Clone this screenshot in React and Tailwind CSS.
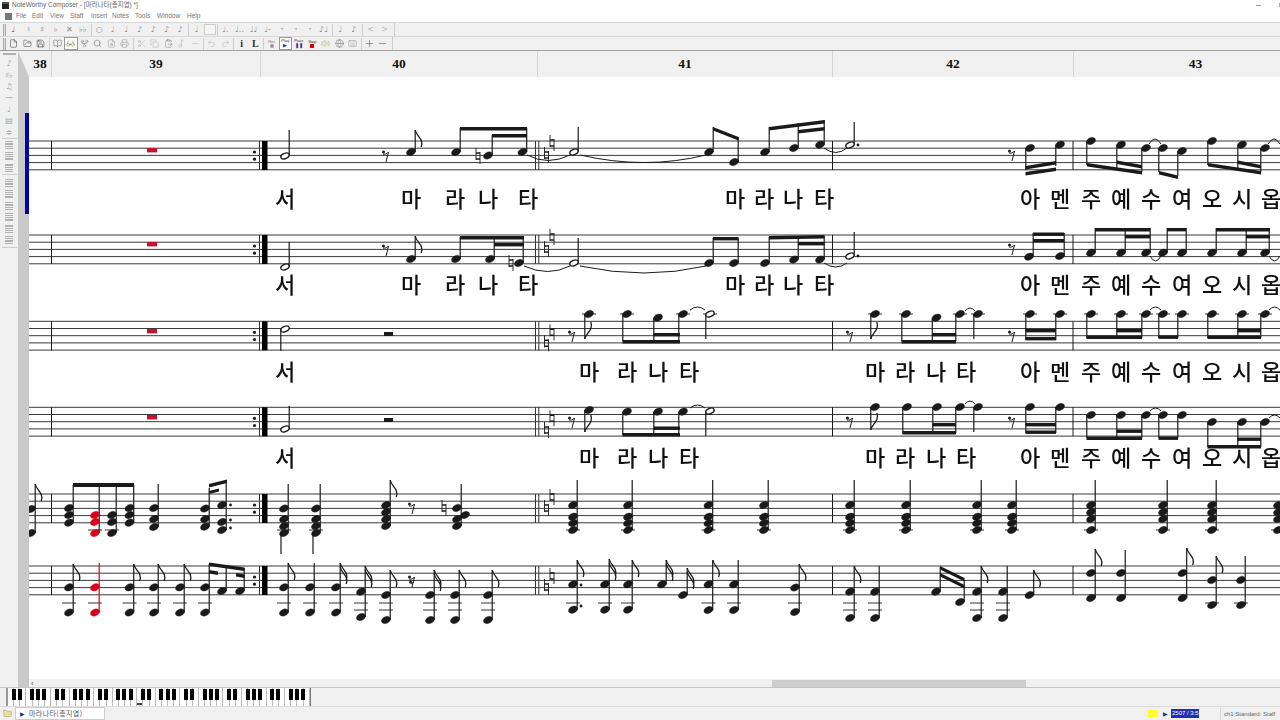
import { File, FolderOpen, Save, BookOpen, Glasses, GitFork, Search, FileSearch, Printer, Scissors, Copy, ClipboardPaste, Music2, Undo2, Redo2, Plus, Minus, Volume2, Globe, Keyboard, Folder } from 'lucide-react'

const INK = '#1a1a1a'
const RED = '#d8001a'

// score helpers, coordinates are page pixels (svg viewBox starts at 29,77)
function Note({ x, ys, tip, flag = 0, open, red, ledgers = [], dots = [], color }) {
  const ink = red ? RED : INK
  const up = tip != null && tip < Math.min(...ys)
  const sx = up ? x + 4.2 : x - 4.2
  const far = up ? Math.max(...ys) : Math.min(...ys)
  return (
    <g>
      {ledgers.map(l => <line key={l} x1={x - 7} x2={x + 7} y1={l} y2={l} stroke="#333" strokeWidth="1" />)}
      {tip != null && <line x1={sx} x2={sx} y1={far} y2={tip} stroke={color || ink} strokeWidth="1.2" />}
      {ys.map((y, i) => (
        <ellipse key={i} cx={x} cy={y} rx={open ? 4.4 : 4.8} ry={open ? 2.6 : 3.4} transform={`rotate(-24 ${x} ${y})`}
          fill={open ? '#fff' : ink} stroke={ink} strokeWidth={open ? 1.4 : 0.3} />
      ))}
      {Array.from({ length: flag }).map((_, i) => {
        const t = tip + i * 4 * (up ? 1 : -1)
        const d = up ? 1 : -1
        return <path key={i} fill="none" stroke={ink} strokeWidth="1.3"
          d={`M${sx} ${t} C${sx + 1} ${t + 6 * d},${sx + 9} ${t + 9 * d},${sx + 6} ${t + 17 * d}`} />
      })}
      {dots.map((d, i) => <circle key={i} cx={d[0]} cy={d[1]} r="1.4" fill={INK} />)}
    </g>
  )
}

const Beam = ({ a, b, c, d, t = 3.4 }) => (
  <polygon points={`${a},${b} ${c},${d} ${c},${d + t} ${a},${b + t}`} fill={INK} />
)

const Natural = ({ x, y }) => (
  <g stroke={INK} fill="none">
    <path d={`M${x - 2} ${y - 8}V${y + 4}M${x + 2} ${y - 4}V${y + 8}`} strokeWidth="0.9" />
    <path d={`M${x - 2} ${y - 3}H${x + 2}M${x - 2} ${y + 3}H${x + 2}`} strokeWidth="1.5" />
  </g>
)

const Rest8 = ({ x, y }) => (
  <g>
    <circle cx={x - 2.5} cy={y - 1} r="1.5" fill={INK} />
    <path d={`M${x - 3} ${y + 1}C${x - 1} ${y + 1.5},${x + 1} ${y + 1},${x + 2.5} ${y - 1}L${x} ${y + 9}`} fill="none" stroke={INK} strokeWidth="1" />
  </g>
)

const Rest16 = ({ x, y }) => (
  <g>
    <Rest8 x={x} y={y} />
    <circle cx={x - 1.5} cy={y + 4} r="1.5" fill={INK} />
    <path d={`M${x - 1} ${y + 6}L${x + 2} ${y + 4}`} stroke={INK} strokeWidth="1" />
  </g>
)

const Curve = ({ d }) => <path d={d} fill="none" stroke={INK} strokeWidth="1" />

const Arch = ({ a, b, y, h = -6 }) => <Curve d={`M${a} ${y}Q${(a + b) / 2} ${y + h * 2},${b} ${y}`} />

const LYRIC_TAIL = [[1030, '아'], [1060, '멘'], [1091, '주'], [1121, '예'], [1151, '수'], [1182, '여'], [1212, '오'], [1242, '시'], [1271, '옵']]
const LYRICS_A = [[285, '서'], [411, '마'], [455, '라'], [488, '나'], [528, '타'], [735, '마'], [764, '라'], [793, '나'], [824, '타'], ...LYRIC_TAIL]
const LYRICS_B = [[285, '서'], [589, '마'], [627, '라'], [658, '나'], [689, '타'], [875, '마'], [905, '라'], [936, '나'], [966, '타'], ...LYRIC_TAIL]

function Staff({ top, rep, nat }) {
  return (
    <g>
      {[0, 1, 2, 3, 4].map(i => (
        <line key={i} x1="29" x2="1280" y1={top + i * 7.2} y2={top + i * 7.2} stroke="#3a3a3a" strokeWidth="1" />
      ))}
      {[51.5, 832.5, 1073].map(x => <line key={x} x1={x} x2={x} y1={top} y2={top + 29} stroke={INK} strokeWidth="1" />)}
      <rect x="262" y={top} width="5.5" height="29" fill="#000" />
      {[259.5, 535.5, 538.8].map(x => <line key={x} x1={x} x2={x} y1={top} y2={top + 29} stroke="#333" strokeWidth="1" />)}
      <circle cx="254.5" cy={top + 11} r="1.6" fill={INK} />
      <circle cx="254.5" cy={top + 18.2} r="1.6" fill={INK} />
      <Natural x={546.5} y={top + nat[0]} />
      <Natural x={552} y={top + nat[1]} />
      {rep && <rect x="147" y={rep} width="10" height="4.4" fill="#c8102e" />}
    </g>
  )
}

function Score() {
  return (
    <svg viewBox="29 77 1251 602" className="w-[1251px] h-[602px] block bg-white shrink-0 blur-[0.3px]">
      <Staff top={141} rep={148} nat={[14, 2]} />
      <Staff top={235} rep={242} nat={[14, 2]} />
      <Staff top={321.3} rep={329} nat={[22, 11]} />
      <Staff top={407.3} rep={415} nat={[22.7, 11]} />
      <Staff top={494} nat={[14, 3]} />
      <Staff top={566} nat={[21, 10]} />

      {/* staff 1 */}
      <Note x={285} ys={[156]} tip={130} open />
      <Rest8 x={386} y={153} />
      <Note x={411} ys={[152]} tip={130} flag={1} />
      <Note x={456} ys={[152]} tip={128} />
      <Natural x={478} y={156} />
      <Note x={488} ys={[155.5]} tip={135} />
      <Note x={522.5} ys={[152]} tip={128} />
      <Beam a={460} b={127} c={527} d={127} />
      <Beam a={492} b={134} c={527} d={134} />
      <Curve d="M527 155Q548 166 570 155" />
      <Note x={574} ys={[152]} tip={127} open />
      <Curve d="M580 155Q645 170 706 155" />
      <Note x={709} ys={[152]} tip={127} />
      <Note x={734} ys={[162]} tip={137} />
      <Beam a={713} b={127} c={738.5} d={137} />
      <Note x={765} ys={[152]} tip={127} />
      <Note x={794} ys={[148]} tip={123} />
      <Note x={820} ys={[144.6]} tip={120} />
      <Beam a={769} b={127} c={824.5} d={120} />
      <Beam a={798} b={130} c={824.5} d={127} />
      <Curve d="M824 148Q836 157 847 148" />
      <Note x={850} ys={[145]} tip={122} open dots={[[858, 145]]} />
      <Rest8 x={1012} y={152} />
      <Note x={1030} ys={[148]} tip={170} />
      <Note x={1060} ys={[144.7]} tip={166} />
      <Beam a={1025.5} b={166} c={1056} d={161} />
      <Beam a={1025.5} b={172} c={1056} d={167.5} />
      <Note x={1091} ys={[141]} tip={165} />
      <Note x={1121} ys={[144.7]} tip={168} />
      <Note x={1146} ys={[148]} tip={172} />
      <Beam a={1087} b={163} c={1142} d={171} />
      <Beam a={1117} b={160.5} c={1142} d={165} />
      <Arch a={1149} b={1161} y={144} h={-5} />
      <Note x={1163} ys={[148]} tip={172} />
      <Note x={1182} ys={[151]} tip={176} />
      <Beam a={1159} b={171} c={1178} d={175.5} />
      <Note x={1212} ys={[141]} tip={165} />
      <Note x={1242} ys={[144.7]} tip={168} />
      <Note x={1265} ys={[148]} tip={172} />
      <Beam a={1208} b={163} c={1261} d={171} />
      <Beam a={1238} b={160.5} c={1261} d={165} />
      <Arch a={1268} b={1280} y={144} h={-5} />

      {/* staff 2 */}
      <Note x={285} ys={[267]} tip={242} open />
      <Rest8 x={386} y={247} />
      <Note x={411} ys={[259]} tip={236} flag={1} />
      <Note x={456} ys={[259]} tip={237} />
      <Note x={490} ys={[259]} tip={237} />
      <Natural x={511} y={263} />
      <Note x={519} ys={[263]} tip={237} />
      <Beam a={460} b={236} c={524} d={236} />
      <Beam a={494} b={243} c={524} d={243} />
      <Curve d="M524 266Q548 277 570 266" />
      <Note x={574} ys={[263]} tip={238} open />
      <Curve d="M580 266Q645 280 706 266" />
      <Note x={709} ys={[263]} tip={238} />
      <Note x={734} ys={[263]} tip={238} />
      <Beam a={713} b={237} c={738.5} d={237} />
      <Note x={765} ys={[263]} tip={237} />
      <Note x={794} ys={[259.5]} tip={236} />
      <Note x={820} ys={[259.5]} tip={236} />
      <Beam a={769} b={236} c={824.5} d={235} />
      <Beam a={798} b={242} c={824.5} d={242} />
      <Curve d="M824 263Q836 271 847 263" />
      <Note x={850} ys={[256]} tip={232} open dots={[[858, 256]]} />
      <Rest8 x={1012} y={246} />
      <Note x={1029} ys={[256.7]} tip={233} />
      <Note x={1060} ys={[256]} tip={233} />
      <Beam a={1033} b={232.5} c={1064} d={232.5} />
      <Beam a={1033} b={239} c={1064} d={239} />
      {[[1091, 1121, 1146, 1095, 1125, 1150], [1212, 1242, 1265, 1216, 1246, 1270]].map(g => (
        <g key={g[0]}>
          <Note x={g[0]} ys={[252.7]} tip={228} />
          <Note x={g[1]} ys={[252.7]} tip={228} />
          <Note x={g[2]} ys={[252.7]} tip={228} />
          <Beam a={g[3]} b={228} c={g[5]} d={228} />
          <Beam a={g[4]} b={235} c={g[5]} d={235} />
        </g>
      ))}
      <Arch a={1150} b={1161} y={256} h={5} />
      <Arch a={1269} b={1280} y={256} h={5} />
      <Note x={1163} ys={[252.7]} tip={228} />
      <Note x={1182} ys={[252.7]} tip={228} />
      <Beam a={1167} b={228} c={1186} d={228} />

      {/* staff 3 */}
      <Note x={285} ys={[329]} tip={351} open />
      <rect x="384" y="332" width="9" height="4" fill={INK} />
      <Rest8 x={572} y={333} />
      <Note x={589} ys={[314]} tip={339} flag={1} ledgers={[314]} />
      <Note x={627} ys={[314]} tip={341} ledgers={[314]} />
      <Note x={658} ys={[317.7]} tip={341} />
      <Note x={683} ys={[314]} tip={341} ledgers={[314]} />
      <Beam a={622.5} b={340} c={680} d={340} />
      <Beam a={653.5} b={333} c={680} d={333} />
      <Arch a={690} b={705} y={310} h={-3} />
      <Note x={710} ys={[314]} tip={339} open ledgers={[314]} />
      <Rest8 x={850} y={333} />
      <Note x={875} ys={[314]} tip={339} flag={1} ledgers={[314]} />
      <Note x={906} ys={[314]} tip={341} ledgers={[314]} />
      <Note x={936.5} ys={[317.7]} tip={341} />
      <Note x={960} ys={[314]} tip={341} ledgers={[314]} />
      <Beam a={901.5} b={340} c={956} d={340} />
      <Beam a={932} b={333} c={956} d={333} />
      <Arch a={965} b={975} y={311} h={-3} />
      <Note x={978} ys={[314]} tip={339} ledgers={[314]} />
      <Rest8 x={1012} y={333} />
      <Note x={1030} ys={[314]} tip={340} ledgers={[314]} />
      <Note x={1060} ys={[314]} tip={340} ledgers={[314]} />
      <Beam a={1025.5} b={329} c={1056} d={329} />
      <Beam a={1025.5} b={337} c={1056} d={337} />
      {[[1091, 1121, 1146], [1212, 1242, 1265]].map(g => (
        <g key={g[0]}>
          {g.map(x => <Note key={x} x={x} ys={[314]} tip={338} ledgers={[314]} />)}
          <Beam a={g[0] - 4.5} b={335.5} c={g[2] - 4} d={335.5} />
          <Beam a={g[1] - 4.5} b={329} c={g[2] - 4} d={329} />
        </g>
      ))}
      <Arch a={1150} b={1161} y={310} h={-3} />
      <Arch a={1269} b={1280} y={310} h={-3} />
      <Note x={1163} ys={[314]} tip={338} ledgers={[314]} />
      <Note x={1182} ys={[314]} tip={338} ledgers={[314]} />
      <Beam a={1158.5} b={335.5} c={1178} d={335.5} />

      {/* staff 4 */}
      <Note x={285} ys={[429]} tip={406} open />
      <rect x="384" y="418" width="9" height="4" fill={INK} />
      <Rest8 x={572} y={419} />
      <Note x={589} ys={[410]} tip={432} flag={1} />
      <Note x={627} ys={[411.7]} tip={435} />
      <Note x={658} ys={[411.7]} tip={435} />
      <Note x={683} ys={[411.7]} tip={435} />
      <Beam a={622.5} b={433} c={680} d={433} />
      <Beam a={653.5} b={426.5} c={680} d={426.5} />
      <Arch a={690} b={705} y={408} h={-3} />
      <Note x={710} ys={[411]} tip={436} open />
      <Rest8 x={850} y={419} />
      <Note x={875} ys={[407]} tip={430} flag={1} />
      <Note x={907} ys={[407]} tip={433} />
      <Note x={937} ys={[407]} tip={433} />
      <Note x={960} ys={[407]} tip={433} />
      <Beam a={902.5} b={431} c={956} d={431} />
      <Beam a={932.5} b={423} c={956} d={423} />
      <Arch a={965} b={975} y={404} h={-3} />
      <Note x={978} ys={[407]} tip={432} />
      <Rest8 x={1012} y={419} />
      <Note x={1030} ys={[407]} tip={433} />
      <Note x={1060} ys={[407]} tip={433} />
      <Beam a={1025.5} b={423} c={1056} d={423} />
      <Beam a={1025.5} b={430.5} c={1056} d={430.5} />
      {[1091, 1121, 1146, 1163, 1182].map(x => <Note key={x} x={x} ys={[415]} tip={438} />)}
      <Beam a={1086.5} b={436.5} c={1142} d={436.5} />
      <Beam a={1116.5} b={429.5} c={1142} d={429.5} />
      <Beam a={1158.5} b={436.5} c={1178} d={436.5} />
      <Arch a={1150} b={1161} y={411} h={-3} />
      <Arch a={1269} b={1280} y={418} h={-3} />
      {[1212, 1242, 1265].map(x => <Note key={x} x={x} ys={[422]} tip={447} />)}
      <Beam a={1207.5} b={445} c={1261} d={445} />
      <Beam a={1237.5} b={437.5} c={1261} d={437.5} />

      {/* staff 5 */}
      <Note x={31} ys={[509, 533]} tip={484} flag={1} />
      <Note x={69} ys={[508, 515, 522.7]} tip={485} />
      <Note x={95} ys={[515, 522, 533]} tip={485} red ledgers={[530]} color={INK} />
      <Note x={112} ys={[515, 522, 533]} tip={485} ledgers={[530]} />
      <Note x={129.5} ys={[508, 515, 522.7]} tip={485} />
      <Beam a={73} b={483} c={134} d={483} t={4} />
      <Note x={154} ys={[508, 519, 527]} tip={484} />
      <Note x={205} ys={[508.5, 519, 526.7]} tip={488} />
      <Note x={222} ys={[505, 522, 530]} tip={480} dots={[[230.5, 505], [230.5, 520], [230.5, 528]]} />
      <Beam a={209} b={484} c={227} d={479.5} t={3.5} />
      <Beam a={209} b={491} c={219} d={488.5} t={3} />
      {[284, 316].map(x => (
        <g key={x}>
          <Note x={x} ys={[508.5, 519, 526, 533]} tip={484} ledgers={[530]} />
          <line x1={x - 3} x2={x - 3} y1={533} y2={554} stroke={INK} strokeWidth="1.2" />
        </g>
      ))}
      <Note x={386} ys={[505, 512, 519, 526]} tip={480} flag={1} />
      <Rest8 x={412} y={505} />
      <Natural x={444} y={508} />
      <Note x={457} ys={[508, 519, 526]} tip={484} />
      <Note x={465} ys={[515]} />
      {[573, 628, 708.5, 764, 850, 906, 977, 1012].map(x => (
        <Note key={x} x={x} ys={[505, 516.7, 523, 530]} tip={480} ledgers={[530]} />
      ))}
      {[1091, 1163, 1212, 1278].map(x => (
        <Note key={x} x={x} ys={[505, 512, 519, 530]} tip={480} ledgers={[530]} />
      ))}

      {/* staff 6 */}
      <Note x={69} ys={[587.3, 612.5]} tip={564} flag={1} ledgers={[603]} />
      <Note x={95} ys={[587.3, 612.5]} tip={563} red ledgers={[603]} />
      <Note x={129.5} ys={[587.3, 612.5]} tip={564} flag={1} ledgers={[603]} />
      <Note x={154} ys={[587.3, 612.5]} tip={564} flag={1} ledgers={[603]} />
      <Note x={180} ys={[587.3, 612.5]} tip={564} flag={1} ledgers={[603]} />
      <Note x={205} ys={[587.3, 612.5]} tip={564} ledgers={[603]} />
      <Note x={222} ys={[591]} tip={566} />
      <Note x={240} ys={[591]} tip={568} />
      <Beam a={209} b={562.5} c={244.5} d={567.5} />
      <Beam a={209} b={570} c={218} d={571.5} />
      <Beam a={236} b={573} c={244.5} d={574.5} />
      <Note x={284} ys={[587.3, 612.5]} tip={563} flag={1} ledgers={[603]} />
      <Note x={310} ys={[587.3, 612.5]} tip={563} ledgers={[603]} />
      <Note x={336} ys={[587.3, 612.5]} tip={563} flag={2} ledgers={[603]} />
      <Note x={361} ys={[591.7, 617]} tip={566} flag={2} ledgers={[603, 610]} />
      <Note x={386} ys={[595, 620]} tip={570} flag={1} ledgers={[603, 610]} />
      <Rest16 x={412} y={578} />
      <Note x={430} ys={[595, 620]} tip={570} flag={2} ledgers={[603, 610]} />
      <Note x={455} ys={[595, 620]} tip={570} flag={1} ledgers={[603, 610]} />
      <Note x={488} ys={[595, 620]} tip={570} flag={1} ledgers={[603, 610]} />
      <Note x={573} ys={[584.3, 609.7]} tip={560} flag={1} ledgers={[603]} dots={[[581, 585], [581, 606]]} />
      <Note x={605} ys={[584.3, 609.7]} tip={559} flag={2} ledgers={[603]} />
      <Note x={628} ys={[584.3, 609.7]} tip={560} flag={1} ledgers={[603]} />
      <Note x={662} ys={[584.3]} tip={560} flag={2} />
      <Note x={683} ys={[595]} tip={568} flag={2} />
      <Note x={708.5} ys={[584.3, 610]} tip={560} flag={1} ledgers={[603]} />
      <Note x={734} ys={[584.3, 610]} tip={560} ledgers={[603]} />
      <Note x={795} ys={[587.5, 612]} tip={564} flag={1} ledgers={[603]} />
      <Note x={850} ys={[591.7, 618]} tip={566} flag={1} ledgers={[603, 610]} />
      <Note x={875} ys={[591.7, 618]} tip={566} ledgers={[603, 610]} />
      <Note x={936} ys={[591.7]} tip={567} />
      <Note x={960} ys={[602]} tip={580} />
      <Beam a={940} b={566} c={964.5} d={578} />
      <Beam a={940} b={573} c={964.5} d={585} />
      <Note x={977} ys={[591.7, 618]} tip={566} flag={1} ledgers={[603, 610]} />
      <Note x={1003} ys={[591.7, 618]} tip={566} ledgers={[603, 610]} />
      <Note x={1029.5} ys={[595]} tip={570} flag={1} />
      <Note x={1091} ys={[573, 598]} tip={549} flag={1} />
      <Note x={1121} ys={[573, 598]} tip={550} />
      <Note x={1182.5} ys={[573, 598]} tip={548} flag={1} />
      <Note x={1212} ys={[580, 605]} tip={556} flag={1} ledgers={[603]} />
      <Note x={1241} ys={[580, 605]} tip={556} ledgers={[603]} />

      {/* lyrics */}
      {[[198, LYRICS_A], [284, LYRICS_A], [371, LYRICS_B], [457, LYRICS_B]].map(([y, row]) =>
        row.map(([x, t]) => (
          <text key={`${y}-${x}`} x={x} y={y + 9} textAnchor="middle" fill="#111"
            className="font-['Noto_Sans_CJK_KR',sans-serif] font-medium text-[22px]">{t}</text>
        ))
      )}
    </svg>
  )
}

const Cell = ({ children, w = 'w-[13.5px]', active }) => (
  <div className={`${w} h-[13px] shrink-0 flex items-center justify-center text-[8px] leading-none text-[#8a8a8a] font-['DejaVu_Sans',sans-serif] ${active ? 'border border-[#9a9a9a] bg-white' : ''}`}>
    {children}
  </div>
)
const Sep = () => <div className="w-px h-[12px] bg-[#cfcfcf] mx-[1px] shrink-0" />
const Grip = () => <div className="w-[3px] h-[12px] ml-[3px] mr-[1px] shrink-0 border-x border-[#aaa] bg-[#ddd]" />

const Ico = ({ I, c = '#8a8a8a', s = 9 }) => <I size={s} strokeWidth={1.2} color={c} />

const Lines = () => (
  <div className="h-[11.4px] shrink-0 flex items-center">
    <div className="h-[8px] w-[8px] flex flex-col justify-between">
      {[0, 1, 2, 3, 4].map(i => <div key={i} className="h-px bg-[#b0b0b0]" />)}
    </div>
  </div>
)

function Piano() {
  const black = [1, 1, 0, 1, 1, 1, 0]
  const keys = Array.from({ length: 49 })
  return (
    <div className="flex h-[18px] ml-[4px] border-l-2 border-[#999]">
      <div className="flex h-[18px] border-r border-[#777]">
        {keys.map((_, i) => (
          <div key={i} className="relative w-[6.17px] h-full bg-white border-r border-[#bbb]">
            {black[i % 7] === 1 && i < 48 && <div className="absolute top-[1px] right-[-2.5px] w-[4px] h-[11px] bg-black z-10" />}
            {i === 21 && <div className="absolute bottom-[1px] left-[0px] w-[5px] h-[2px] bg-[#444] z-10" />}
          </div>
        ))}
      </div>
    </div>
  )
}

export default function App() {
  const menu = [['File', 'w-[16px]'], ['Edit', 'w-[18px]'], ['View', 'w-[20px]'], ['Staff', 'w-[21px]'], ['Insert', 'w-[21px]'], ['Notes', 'w-[23px]'], ['Tools', 'w-[22px]'], ['Window', 'w-[30px]'], ['Help', 'w-[20px]']]
  return (
    <div className="w-[1280px] h-[720px] overflow-hidden flex flex-col bg-[#f0f0f0] font-['Liberation_Sans',sans-serif]">
      <div className="h-[10px] bg-white flex items-center shrink-0">
        <div className="w-[7px] h-[7px] ml-[2px] mr-[3px] bg-[#222] border-t-2 border-[#555]" />
        <span className="text-[6.5px] leading-none text-[#666] font-['Liberation_Sans','Noto_Sans_CJK_KR',sans-serif]">NoteWorthy Composer - [마라나타(총지엽) *]</span>
        <div className="ml-auto w-[5px] h-px bg-[#999]" />
        <div className="ml-[18px] w-[1px] h-[4px] bg-[#aaa]" />
      </div>
      <div className="h-[12px] bg-white flex items-center shrink-0">
        <div className="w-[7px] h-[7px] ml-[5px] mr-[4px] bg-[#777]" />
        {menu.map(([m, w]) => <span key={m} className={`${w} text-[6.5px] leading-none text-[#777]`}>{m}</span>)}
      </div>

      <div className="h-[14px] flex items-center shrink-0 border-t border-[#d8d8d8]">
        <Grip />
        <Cell w="w-[13px]"><span className="text-[#c33]">♩</span></Cell>
        <div className="w-[2px]" />
        {['♮', '♯', '♭', '✕', '♭♭'].map(g => <Cell key={g}>{g}</Cell>)}
        <Sep />
        {['○', '♩', '♩', '♪', '♪', '♪', '♪'].map((g, i) => <Cell key={i}>{g}</Cell>)}
        <Sep />
        <Cell>♩</Cell>
        <div className="w-[12px] h-[11px] border border-[#ccc] bg-[#f6f6f6] shrink-0" />
        <Sep />
        {['♩.', '♩..', '♩♩', '♩-', '𝄾', '𝄾', '𝄾', '♪♩'].map((g, i) => <Cell key={i} w="w-[14px]">{g}</Cell>)}
        <Sep />
        <Cell>♩</Cell>
        <Cell>♪</Cell>
        <Sep />
        <Cell w="w-[14px]"><span className="text-[#bbb]">&lt;</span></Cell>
        <Cell w="w-[14px]"><span className="text-[#bbb]">&gt;</span></Cell>
        <div className="ml-[2px] w-px h-[14px] bg-[#ccc]" />
      </div>

      <div className="h-[14px] flex items-center shrink-0 border-t border-[#d8d8d8]">
        <Grip />
        <Cell><Ico I={File} c="#222" /></Cell>
        <Cell><Ico I={FolderOpen} c="#333" /></Cell>
        <Cell><Ico I={Save} c="#111" /></Cell>
        <Sep />
        <Cell><Ico I={BookOpen} c="#555" /></Cell>
        <Cell active><Ico I={Glasses} c="#5a7a20" /></Cell>
        <Cell><Ico I={GitFork} c="#777" /></Cell>
        <Cell><Ico I={Search} c="#555" /></Cell>
        <Cell><Ico I={FileSearch} /></Cell>
        <Cell><Ico I={Printer} /></Cell>
        <Sep />
        <Cell><Ico I={Scissors} c="#aaa" /></Cell>
        <Cell><Ico I={Copy} c="#aaa" /></Cell>
        <Cell><Ico I={ClipboardPaste} c="#777" /></Cell>
        <Cell><Ico I={Music2} c="#aaa" /></Cell>
        <Cell><Ico I={Minus} c="#aaa" /></Cell>
        <Sep />
        <Cell><Ico I={Undo2} c="#aaa" /></Cell>
        <Cell><Ico I={Redo2} c="#aaa" /></Cell>
        <Sep />
        <Cell><span className="font-['Liberation_Serif',serif] font-bold text-[10px] text-[#333]">i</span></Cell>
        <Cell><span className="font-['Liberation_Serif',serif] font-bold text-[10px] text-[#333]">L</span></Cell>
        <Sep />
        <Cell><div className="flex flex-col items-center text-[4px] text-[#777] font-['Liberation_Sans']"><span>Rec</span><span className="w-[4px] h-[4px] rounded-full bg-[#999]" /></div></Cell>
        <Cell active><div className="flex flex-col items-center text-[4px] text-[#333] font-['Liberation_Sans']"><span>Play</span><span className="text-[5px] text-[#23308a]">▶</span></div></Cell>
        <Cell><div className="flex flex-col items-center text-[4px] text-[#333] font-['Liberation_Sans']"><span>Paus</span><span className="text-[5px] text-[#23308a]">❚❚</span></div></Cell>
        <Cell><div className="flex flex-col items-center text-[4px] text-[#333] font-['Liberation_Sans']"><span>Stop</span><span className="w-[4px] h-[4px] bg-[#d00]" /></div></Cell>
        <Cell><Ico I={Volume2} c="#7a9a30" /></Cell>
        <Cell><Ico I={Globe} c="#666" /></Cell>
        <Cell><Ico I={Keyboard} c="#888" /></Cell>
        <Sep />
        <Cell><Ico I={Plus} c="#555" s={11} /></Cell>
        <Cell><Ico I={Minus} c="#555" s={11} /></Cell>
        <div className="ml-[2px] w-px h-[14px] bg-[#ccc]" />
      </div>

      <div className="flex-1 min-h-0 flex border-t border-[#a0a0a0]">
        <div className="w-[18px] shrink-0 flex flex-col items-center pt-[2px] bg-[#f0f0f0]">
          <div className="w-[13px] h-[2px] bg-[#b0b0b0] mb-[3.5px] shrink-0" />
          {['♪', '♯♭', '♫', '—', '♩', '▤', '≑'].map((g, i) => (
            <div key={i} className="h-[11.4px] shrink-0 flex items-center justify-center text-[8px] leading-none text-[#a0a0a0] font-['DejaVu_Sans',sans-serif]">{g}</div>
          ))}
          <div className="w-[15px] h-px bg-[#ccc] shrink-0" />
          <Lines /><Lines /><Lines />
          <div className="w-[15px] h-px bg-[#ccc] mt-[1px] mb-[2px] shrink-0" />
          <Lines /><Lines /><Lines /><Lines /><Lines /><Lines />
          <div className="w-[15px] h-px bg-[#ccc] mt-[1px] shrink-0" />
        </div>

        <div className="w-[11px] shrink-0 bg-[#c9c9c9] flex flex-col">
          <svg viewBox="0 0 11 26" className="w-[11px] h-[26px] block shrink-0">
            <polygon points="0,0 11,0 11,26" fill="#f0f0f0" />
          </svg>
          <div className="mt-[36px] ml-[7px] w-[4px] h-[101px] bg-[#0000aa] shrink-0" />
        </div>

        <div className="flex-1 min-w-0 flex flex-col overflow-hidden">
          <div className="h-[26px] shrink-0 flex bg-[#f0f0f0] font-['Liberation_Serif',serif] font-bold text-[13.5px] text-[#111]">
            {[['38', 'w-[23px]'], ['39', 'w-[209px]'], ['40', 'w-[277px]'], ['41', 'w-[295px]'], ['42', 'w-[241px]'], ['43', 'w-[244px]']].map(([n, w]) => (
              <div key={n} className={`${w} shrink-0 flex items-center justify-center border-r border-[#d4d4d4]`}>{n}</div>
            ))}
          </div>
          <Score />
          <div className="h-[9px] shrink-0 flex items-center bg-[#f0f0f0]">
            <span className="w-[743px] pl-[2px] text-[8px] leading-none text-[#555]">‹</span>
            <div className="w-[254px] h-[8px] bg-[#cdcdcd]" />
          </div>
        </div>
      </div>

      <div className="h-[19px] shrink-0 flex items-center border-t border-[#c4c4c4] bg-[#f0f0f0] -mt-[1px]">
        <div className="ml-[2px]"><Piano /></div>
      </div>

      <div className="h-[14px] shrink-0 flex items-center bg-[#f0f0f0] border-t border-[#dcdcdc]">
        <div className="ml-[3px] mr-[3px]"><Folder size={9} strokeWidth={1.2} color="#8a8a50" fill="#e8e0a0" /></div>
        <div className="w-[90px] h-[13px] flex items-center bg-white border border-[#ccc] pl-[4px]">
          <span className="text-[6px] text-[#23308a] mr-[4px] leading-none">▶</span>
          <span className="text-[7px] tracking-[0.4px] leading-none text-[#555] font-['Noto_Sans_CJK_KR',sans-serif]">마라나타(총지엽)</span>
        </div>
        <div className="ml-[1043px] w-[10px] h-[7px] bg-[#ffff30] shrink-0" />
        <span className="ml-[5px] text-[6px] leading-none text-[#23308a]">▶</span>
        <span className="ml-[3px] px-[1px] w-[28px] bg-[#2030b0] text-white text-[6px] leading-[9px] whitespace-nowrap overflow-hidden">2507 / 3:5:</span>
        <div className="ml-[21px] w-px h-[12px] bg-[#d8d8d8]" />
        <span className="ml-[3px] text-[6px] leading-none text-[#666] whitespace-nowrap">ch1 Standard: Staff</span>
      </div>
    </div>
  )
}
